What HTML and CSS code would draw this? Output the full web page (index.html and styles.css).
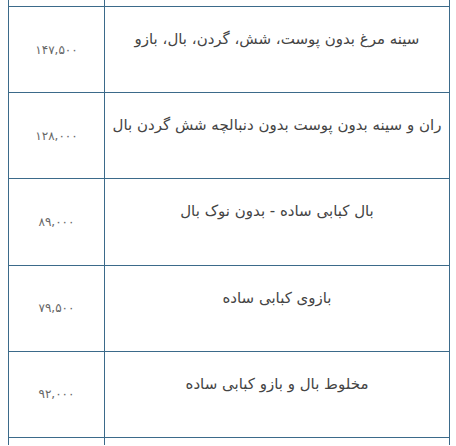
FILE: index.html
```html
<!DOCTYPE html>
<html lang="fa" dir="rtl">
<head>
<meta charset="utf-8">
<link rel="stylesheet" href="styles.css">
</head>
<body>
<table class="price-table">
  <tbody>
    <tr class="row partial top" aria-hidden="true">
      <td class="name"></td>
      <td class="price"></td>
    </tr>
    <tr class="row">
      <td class="name"><p>سینه مرغ بدون پوست، شش، گردن، بال، بازو</p></td>
      <td class="price">۱۴۷,۵۰۰</td>
    </tr>
    <tr class="row">
      <td class="name"><p>ران و سینه بدون پوست بدون دنبالچه شش گردن بال</p></td>
      <td class="price">۱۲۸,۰۰۰</td>
    </tr>
    <tr class="row">
      <td class="name"><p>بال کبابی ساده - بدون نوک بال</p></td>
      <td class="price">۸۹,۰۰۰</td>
    </tr>
    <tr class="row">
      <td class="name"><p>بازوی کبابی ساده</p></td>
      <td class="price">۷۹,۵۰۰</td>
    </tr>
    <tr class="row">
      <td class="name"><p>مخلوط بال و بازو کبابی ساده</p></td>
      <td class="price">۹۲,۰۰۰</td>
    </tr>
    <tr class="row partial bottom" aria-hidden="true">
      <td class="name"></td>
      <td class="price"></td>
    </tr>
  </tbody>
</table>
</body>
</html>
```

FILE: styles.css
```css
html, body {
  margin: 0;
  padding: 0;
  background: #ffffff;
}

body {
  padding: 0 6px 0 8px;
  font-family: "DejaVu Sans", "Noto Sans", sans-serif;
  overflow: hidden;
  height: 446px;
}

.price-table {
  width: 442px;
  border-collapse: collapse;
  direction: rtl;
}

.price-table td {
  border: 1px solid #3b6a8a;
  height: 85.2px;
  padding: 0;
  vertical-align: middle;
  text-align: center;
}

.price-table .partial.top td {
  border-top: none;
  height: 6px;
}

.price-table .partial.bottom td {
  border-bottom: none;
  height: 7px;
}

.name {
  width: 344px;
  color: #444444;
  font-size: 15px;
}

.name p {
  margin: 0 0 20px;
  line-height: 25px;
}

.price {
  color: #666666;
  font-size: 12px;
}
```
